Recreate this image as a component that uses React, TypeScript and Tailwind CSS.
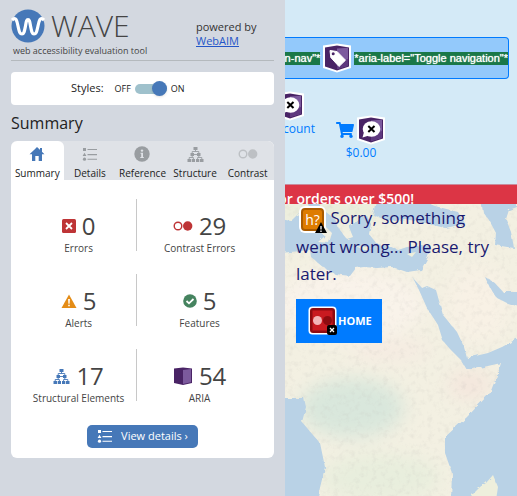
import React, { useState } from "react";

type IconProps = { className?: string };

function WaveLogo() {
  return (
    <svg viewBox="0 0 34 34" className="size-[34px] shrink-0" aria-hidden="true">
      <circle cx="17" cy="17" r="16.5" fill="#4678b8" />
      <path
        d="M1 11C5 7 6 12 7 17C8.500 24 9 25 11 25C13 25 13.500 22 14.500 17C15.300 12.500 15.500 10.500 17 10.500C18.500 10.500 18.700 12.500 19.500 17C20.500 22 21 25 23 25C25 25 25.500 24 27 17C28 12 29 7 33 11"
        fill="none"
        stroke="#fff"
        strokeWidth="3.200"
      />
    </svg>
  );
}

function HomeIcon() {
  return (
    <svg viewBox="0 0 16 14" className="h-[14px] w-4" fill="#4678b8" aria-hidden="true">
      <path d="M8 0L15.500 7.200H13V14H9.700V9H6.300V14H3V7.200H0.500L5 3Z" />
      <path d="M11 1H13V5H11Z" />
    </svg>
  );
}

function ListIcon({ className }: IconProps) {
  return (
    <svg viewBox="0 0 15 13" className={className} fill="currentColor" aria-hidden="true">
      <path d="M1 0H4V3H1ZM2.500 4.700L4.400 8H0.600Z" />
      <circle cx="2.500" cy="11.200" r="1.600" />
      <path d="M5.500 1H15V2H5.500ZM5.500 6H15V7.200H5.500ZM5.500 10.700H15V11.700H5.500Z" />
    </svg>
  );
}

function InfoIcon() {
  return (
    <svg viewBox="0 0 16 16" className="size-4" aria-hidden="true">
      <circle cx="8" cy="8" r="7.700" fill="#999da1" />
      <circle cx="8" cy="4.600" r="1.200" fill="#dfe2e7" />
      <path d="M6.500 6.800H9V11H9.800V12H6.300V11H7.200V7.800H6.500Z" fill="#dfe2e7" />
    </svg>
  );
}

function TreeIcon({ className }: IconProps) {
  return (
    <svg viewBox="0 0 17 15" className={className} fill="currentColor" aria-hidden="true">
      <path d="M6.500 0H10.500V3H6.500ZM3.500 6H7V9H3.500ZM10 6H13.500V9H10ZM0.500 12H4V15H0.500ZM4.700 12H8V15H4.700ZM9 12H12.300V15H9ZM13 12H16.500V15H13Z" />
      <path
        d="M8.500 3V4.500M5.200 6V4.500H11.800V6M5.200 9V10.500M11.800 9V10.500M2.200 12V10.500H6.400V12M10.600 12V10.500H14.800V12M6 7.500H11"
        fill="none"
        stroke="currentColor"
        strokeWidth="0.900"
      />
    </svg>
  );
}

function ContrastIcon({ className }: IconProps) {
  return (
    <svg viewBox="0 0 20 10" className={className} aria-hidden="true">
      <circle cx="5" cy="5" r="3.800" fill="none" stroke="currentColor" strokeWidth="1.400" />
      <circle cx="14.700" cy="5" r="4.700" fill="currentColor" />
    </svg>
  );
}

function ErrorIcon() {
  return (
    <svg viewBox="0 0 14 14" className="size-[14px]" aria-hidden="true">
      <rect width="14" height="14" rx="1.500" fill="#be3436" />
      <path d="M4 4L10 10M10 4L4 10" stroke="#fff" strokeWidth="1.800" />
    </svg>
  );
}

function AlertIcon() {
  return (
    <svg viewBox="0 0 16 14" className="h-[14px] w-4" aria-hidden="true">
      <path d="M8 0.500L15.500 14H0.500Z" fill="#e48c16" />
      <path d="M7.100 5H8.900L8.600 9.800H7.400ZM7.200 10.700H8.800V12.200H7.200Z" fill="#fff" />
    </svg>
  );
}

function FeatureIcon() {
  return (
    <svg viewBox="0 0 14 14" className="size-[14px]" aria-hidden="true">
      <circle cx="7" cy="7" r="6.800" fill="#45835f" />
      <path d="M3.500 7L6 9.300L10.500 5" fill="none" stroke="#fff" strokeWidth="1.800" />
    </svg>
  );
}

function AriaIcon() {
  return (
    <svg viewBox="0 0 20 18" className="h-[18px] w-5" aria-hidden="true">
      <path d="M1 1.500L10 0.500L19 1.500V16L10 18L1 16Z" fill="#492365" />
      <path d="M10 3L18 2V15.200L10 17Z" fill="#7c5a9d" />
    </svg>
  );
}

function AriaBadge({ children }: { children: React.ReactNode }) {
  return (
    <svg viewBox="0 0 30 30" className="size-[30px] shrink-0" aria-hidden="true">
      <path d="M1 2.500L15 0.500L29 2.500V25L15 29.500L1 25Z" fill="#fff" />
      <path d="M3 4.500L15 2.500L27 4.500V23.500L15 27.500L3 23.500Z" fill="#492365" />
      <path d="M15 5.500L26 4.800V22.700L15 26Z" fill="#7c5a9d" />
      <path d="M15 19L26 16V22.700L15 26Z" fill="#5e397e" />
      {children}
    </svg>
  );
}

function TagBadge() {
  return (
    <AriaBadge>
      <path d="M8 7.500L15 8.500L23.500 17.200L17 23.500L8.800 14.500Z" fill="#fff" stroke="#fff" strokeLinejoin="round" />
      <circle cx="11.200" cy="10.800" r="1.500" fill="#492365" />
    </AriaBadge>
  );
}

function SpeechBadge() {
  return (
    <AriaBadge>
      <ellipse cx="15.500" cy="14" rx="8.800" ry="7.800" fill="#fff" />
      <path d="M8 17L6.500 22.500L13 20.500Z" fill="#fff" />
      <path d="M12.300 11L18.500 17M18.500 11L12.300 17" stroke="#000" strokeWidth="2" />
    </AriaBadge>
  );
}

function CartIcon() {
  return (
    <svg viewBox="0 0 576 512" className="h-4 w-[18px]" fill="#007bff" aria-hidden="true">
      <path d="M528.120 301.319l47.273-208C578.806 78.301 567.391 64 551.990 64H159.208l-9.166-44.810C147.758 8.021 137.930 0 126.529 0H24C10.745 0 0 10.745 0 24v16c0 13.255 10.745 24 24 24h69.883l70.248 343.435C147.325 417.100 136 435.222 136 456c0 30.928 25.072 56 56 56s56-25.072 56-56c0-15.674-6.447-29.835-16.824-40h209.647C430.447 426.165 424 440.326 424 456c0 30.928 25.072 56 56 56s56-25.072 56-56c0-22.172-12.888-41.332-31.579-50.405l5.517-24.276c3.413-15.018-8.002-29.319-23.403-29.319H218.117l-6.545-32h293.145c11.206 0 20.920-7.754 23.403-18.681z" />
    </svg>
  );
}

function HeadingBadge() {
  return (
    <span className="relative inline-block size-[27px] rounded-md bg-white p-[2px] align-middle">
      <span className="block size-[23px] rounded-sm border-2 border-[#a95b00] bg-[#de7c00] text-center font-['Open_Sans',sans-serif] text-sm leading-[19px] text-white">
        h?
      </span>
      <svg viewBox="0 0 12 11" className="absolute -right-px bottom-0 h-[11px] w-3" aria-hidden="true">
        <path d="M6 0L12 11H0Z" fill="#000" />
        <path d="M6 4V7.500M6 8.500V10" stroke="#fff" strokeWidth="1.300" />
      </svg>
    </span>
  );
}

function ContrastErrorBadge() {
  return (
    <svg viewBox="0 0 30 30" className="size-[30px] shrink-0" aria-hidden="true">
      <rect x="0.500" y="0.500" width="28" height="28" rx="4" fill="#fff" />
      <rect x="2" y="2" width="25" height="25" rx="3" fill="#8e0b10" />
      <rect x="4.500" y="4.500" width="20" height="20" fill="#c91a20" />
      <circle cx="9.500" cy="14.500" r="4.500" fill="#f3b5b7" />
      <circle cx="19.500" cy="14.500" r="4.500" fill="#8e0b10" />
      <rect x="19" y="19" width="10" height="10" rx="2" fill="#000" />
      <path d="M22 22L26 26M26 22L22 26" stroke="#fff" strokeWidth="1.300" />
    </svg>
  );
}

function MapBackdrop() {
  return (
    <svg
      viewBox="285 204 232 292"
      preserveAspectRatio="xMinYMin slice"
      className="absolute inset-0 size-full"
      aria-hidden="true"
    >
      <defs>
        <filter id="coast" x="0" y="0" width="100%" height="100%">
          <feTurbulence type="fractalNoise" baseFrequency="0.150" numOctaves="3" seed="4" result="n" />
          <feDisplacementMap in="SourceGraphic" in2="n" scale="4" />
        </filter>
        <filter id="relief" x="0" y="0" width="100%" height="100%">
          <feTurbulence type="fractalNoise" baseFrequency="0.180" numOctaves="4" seed="9" />
          <feColorMatrix values="0 0 0 0 0.500  0 0 0 0 0.480  0 0 0 0 0.450  1.600 0 0 0 -0.780" />
        </filter>
        <filter id="soft" x="-40%" y="-40%" width="180%" height="180%">
          <feGaussianBlur stdDeviation="9" />
        </filter>
      </defs>
      <rect x="285" y="204" width="232" height="292" fill="#f3f0e2" />
      <g filter="url(#soft)">
        <ellipse cx="350" cy="305" rx="75" ry="35" fill="#f9f3ea" />
        <ellipse cx="478" cy="305" rx="32" ry="38" fill="#f8f1e5" />
        <ellipse cx="352" cy="408" rx="52" ry="30" fill="#d9e7dc" />
        <ellipse cx="390" cy="350" rx="40" ry="10" fill="#f6ebe2" />
        <ellipse cx="470" cy="385" rx="22" ry="14" fill="#f4e6dd" />
        <ellipse cx="380" cy="478" rx="60" ry="24" fill="#e8eedd" />
        <ellipse cx="330" cy="212" rx="60" ry="9" fill="#e6ecd8" />
      </g>
      <g filter="url(#relief)" opacity="0.280">
        <rect x="285" y="204" width="232" height="292" />
      </g>
      <g fill="#b9d2e6" filter="url(#coast)">
        <path d="M280 219L291 221L300 212L306 215L316 229L325 236L318 242L329 243L332 233L321 222L311 209L306 200H317L322 209L335 219L339 229L347 239L353 237L349 227L358 220L367 216L371 224L369 234L377 244L389 246L398 250L407 247L421 245L431 247L428 257L421 270L407 272L392 267L377 268L364 267L356 268L350 276L335 274L323 267L311 257L310 250L280 253Z" />
        <path d="M376 200H420L435 206L458 212L465 224L445 228L425 223L405 219L389 221L373 215Z" />
        <path d="M481 200H517V207L509 210L506 219L511 232L514 248L495 245L496 233L489 220L483 212Z" />
        <path d="M413 278L422 288L427 286L436 290L443 315L457 332L464 347L467 358L488 353L502 347L520 337V500H451L452 473L445 453V437L467 417L490 393L498 373L501 363L479 368L467 370L461 360L451 350L443 341L438 325L427 308L419 290Z" />
        <path d="M485 277L495 283L503 292H520V307L507 303L497 298L490 288Z" />
        <path d="M280 398H304L306 407L302 422L313 435L320 443L325 467L317 500H280Z" />
      </g>
      <g fill="#eeefdc" filter="url(#coast)">
        <path d="M467 500L480 487L486 483L493 475L498 487L496 500Z" />
        <path d="M355 246L370 247L365 250Z" />
        <path d="M407 254L416 252L412 257Z" />
      </g>
    </svg>
  );
}

const tabs = [
  { label: "Summary", icon: <HomeIcon /> },
  { label: "Details", icon: <ListIcon className="h-[13px] w-[15px] text-[#999da1]" /> },
  { label: "Reference", icon: <InfoIcon /> },
  { label: "Structure", icon: <TreeIcon className="h-[15px] w-[17px] text-[#999da1]" /> },
  { label: "Contrast", icon: <ContrastIcon className="h-[10px] w-5 text-[#bdc0c4]" /> },
];

const stats = [
  { label: "Errors", count: 0, icon: <ErrorIcon /> },
  { label: "Contrast Errors", count: 29, icon: <ContrastIcon className="h-[10px] w-5 text-[#be3436]" /> },
  { label: "Alerts", count: 5, icon: <AlertIcon /> },
  { label: "Features", count: 5, icon: <FeatureIcon /> },
  { label: "Structural Elements", count: 17, icon: <TreeIcon className="h-[15px] w-[17px] text-[#4678b8]" /> },
  { label: "ARIA", count: 54, icon: <AriaIcon /> },
];

function Sidebar() {
  const [styles, setStyles] = useState(true);
  const [active, setActive] = useState("Summary");
  return (
    <aside className="w-[285px] shrink-0 bg-[#d3d8e0] px-[11px] pt-2 font-['Open_Sans',sans-serif] text-[#222]">
      <header className="flex justify-between border-b border-[#b4b9bd] pb-[3px]">
        <div>
          <div className="flex items-center gap-[6px]">
            <WaveLogo />
            <span className="text-3xl leading-9 font-light text-[#444]">WAVE</span>
          </div>
          <p className="mt-px pl-[2px] text-[9px] leading-3 text-[#444]">web accessibility evaluation tool</p>
        </div>
        <p className="w-[78px] pt-3 text-[11px] leading-[14px] text-[#333]">
          powered by
          <br />
          <a href="#webaim" className="text-[#2456c8] underline">WebAIM</a>
        </p>
      </header>

      <div className="mt-[11px] flex h-[33px] items-center rounded-sm bg-white pl-[60px]">
        <span className="text-[11px]">Styles:</span>
        <label className="ml-[11px] flex items-center gap-1 text-[9px]">
          OFF
          <span className="relative flex h-4 w-8 items-center">
            <span className="h-[10px] w-full rounded-full bg-[#9fc1cc]" />
            <input
              type="checkbox"
              role="switch"
              aria-label="Styles"
              checked={styles}
              onChange={() => setStyles(!styles)}
              className="peer absolute inset-0 appearance-none"
            />
            <span className="pointer-events-none absolute left-0 size-[15px] rounded-full bg-[#4678b8] shadow-sm peer-checked:right-0 peer-checked:left-auto" />
          </span>
          ON
        </label>
      </div>

      <h1 className="mt-2 text-base leading-5">Summary</h1>

      <section className="mt-2 overflow-hidden rounded-md bg-white pb-[10px]">
        <div role="tablist" className="grid grid-cols-5 bg-[#dfe2e7]">
          {tabs.map((tab) => (
            <button
              key={tab.label}
              role="tab"
              aria-selected={active === tab.label}
              onClick={() => setActive(tab.label)}
              className="flex h-[39px] flex-col items-center rounded-t-md text-[10px] leading-3 whitespace-nowrap aria-selected:bg-white"
            >
              <span className="flex h-[26px] items-center">{tab.icon}</span>
              {tab.label}
            </button>
          ))}
        </div>
        <ul className="mt-[19px] grid grid-cols-[48%_52%] gap-y-[23px]">
          {stats.map((stat) => (
            <li
              key={stat.label}
              className="flex h-[52px] flex-col items-center text-[#444] odd:border-r odd:border-[#c8c8c8] odd:pl-[10px] even:pr-3"
            >
              <span className="mt-[13px] flex h-7 items-center gap-[6px] text-2xl leading-7">
                {stat.icon}
                {stat.count}
              </span>
              <span className="text-[10px] leading-4 whitespace-nowrap">{stat.label}</span>
            </li>
          ))}
        </ul>
        <button className="mx-auto mt-6 flex h-[23px] items-center gap-[9px] rounded-[5px] bg-[#4678b8] px-[10px] text-[11px] text-white">
          <ListIcon className="h-[13px] w-[15px]" />
          View details ›
        </button>
      </section>
    </aside>
  );
}

function Storefront() {
  return (
    <main className="flex min-w-0 flex-1 flex-col overflow-hidden font-['Open_Sans',sans-serif]">
      <header className="h-[184px] bg-[#d4eaf7] pt-[37px]">
        <div className="pr-2">
          <button
            aria-label="Toggle navigation"
            className="flex h-[42px] w-full items-center justify-end gap-[2px] overflow-hidden rounded-r-sm border-y border-r border-[#007bff] bg-[#93c9fb] font-['Liberation_Sans',sans-serif] text-[11px] leading-[13px] whitespace-nowrap text-white [text-shadow:0_0_1px_#fff]"
          >
            <span className="bg-[#1a7848]">ain-nav"*</span>
            <TagBadge />
            <span className="bg-[#1a7848]">*aria-label="Toggle navigation"*</span>
          </button>
        </div>
        <nav className="flex gap-[21px] pt-3 text-xs leading-4 text-[#007bff]">
          <a href="#account" className="flex w-[30px] flex-col items-end">
            <span className="mr-[10px]">
              <SpeechBadge />
            </span>
            <span className="whitespace-nowrap">count</span>
          </a>
          <a href="#cart" className="flex flex-col items-center pt-6">
            <span className="flex items-center gap-[2px]">
              <CartIcon />
              <SpeechBadge />
            </span>
            <span>$0.00</span>
          </a>
        </nav>
      </header>
      <div className="flex h-5 w-full items-start overflow-hidden border-t border-[#c98b9c] bg-[#dc3545] pt-[2px]">
        <div className="flex w-[129px] shrink-0 justify-end text-sm leading-6 font-semibold whitespace-nowrap text-white">
          or orders over $500!
        </div>
      </div>
      <section className="relative flex-1">
        <MapBackdrop />
        <div className="relative px-[11px]">
          <h2 className="text-[17px] leading-[27px] text-[#191970]">
            <span className="pl-[3px]" />
            <HeadingBadge /> Sorry, something went wrong... Please, try later.
          </h2>
          <button className="mt-3 flex h-11 items-center bg-[#007bff] pr-[10px] pl-3 text-[11px] font-bold text-white">
            <ContrastErrorBadge />
            HOME
          </button>
        </div>
      </section>
    </main>
  );
}

export default function App() {
  return (
    <div className="flex min-h-screen bg-[#d3d8e0]">
      <Sidebar />
      <Storefront />
    </div>
  );
}
